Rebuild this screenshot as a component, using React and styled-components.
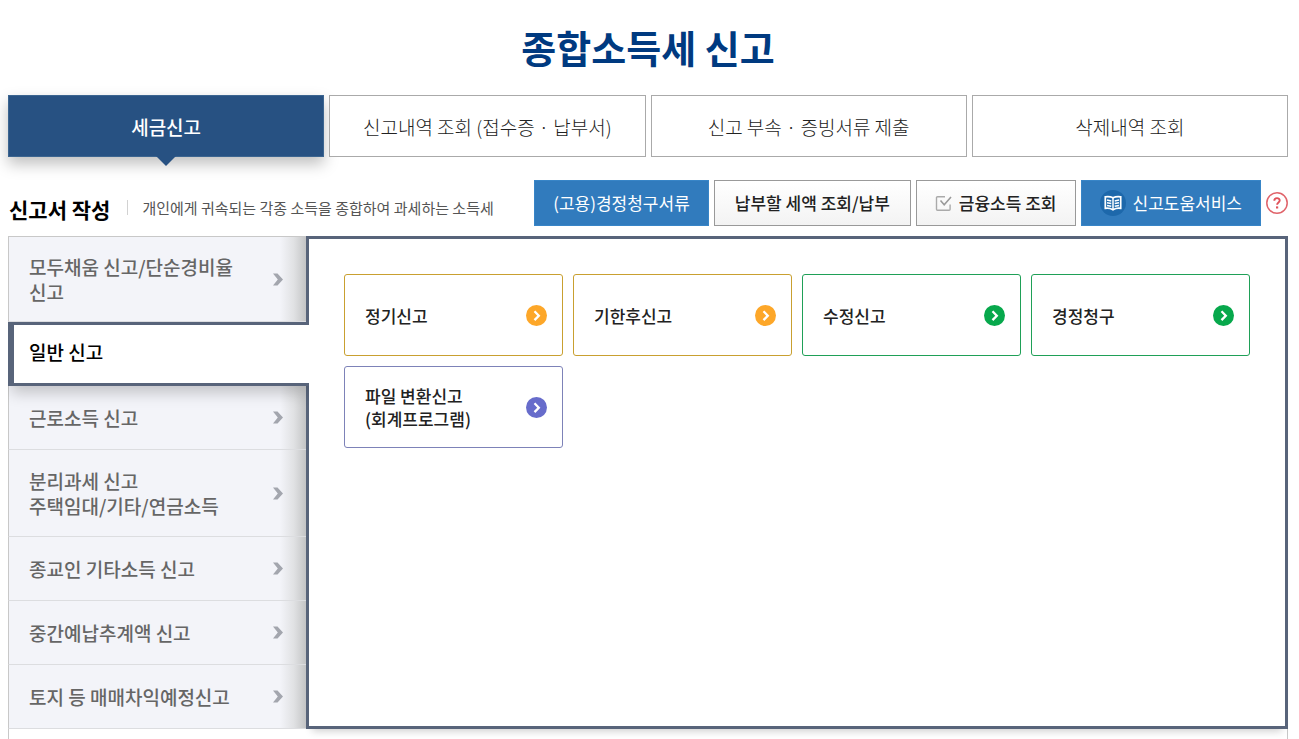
import React from "react";
import styled, { createGlobalStyle, css } from "styled-components";

const Global = createGlobalStyle`
  * { box-sizing: border-box; }
  html, body, #root { height: 100%; }
  body {
    margin: 0;
    background: #fff;
    color: #222;
    font-family: "Noto Sans CJK KR", "Liberation Sans", sans-serif;
  }
  button, a { font-family: inherit; }
`;

const Page = styled.div`
  display: flex;
  flex-direction: column;
  height: 100%;
  min-width: 1240px;
  padding: 0 11px 0 8px;
  overflow: hidden;
`;

const Title = styled.h1`
  margin: 0;
  padding: 17px 0 18px;
  color: #003a80;
  font-size: 38px;
  font-weight: 700;
  line-height: 60px;
  text-align: center;
`;

const Tabs = styled.nav`
  display: grid;
  grid-template-columns: repeat(4, 1fr);
  gap: 5px;
`;

const Tab = styled.a`
  position: relative;
  display: flex;
  align-items: center;
  justify-content: center;
  height: 62px;
  padding-top: 2px;
  border: 1px solid #aaa;
  background: #fff;
  color: #222;
  font-size: 19px;
  font-weight: 300;
  line-height: 28px;
  text-decoration: none;
  ${(p) =>
    p.$active &&
    css`
      border-color: #3c6590;
      background: #275182;
      color: #fff;
      font-weight: 500;
      box-shadow: 0 7px 14px rgba(0, 0, 0, 0.25);
      &::after {
        content: "";
        position: absolute;
        top: 100%;
        left: 50%;
        margin-left: -10px;
        border: 10px solid transparent;
        border-top-color: #275182;
        border-bottom: 0;
      }
    `}
`;

const Header = styled.div`
  display: flex;
  align-items: center;
  justify-content: space-between;
  height: 46px;
  margin: 23px 0 10px;
`;

const Heading = styled.div`
  display: flex;
  align-items: center;
  padding: 12px 0 0 1px;
`;

const SectionTitle = styled.h2`
  margin: 0;
  padding-right: 17px;
  color: #000;
  font-size: 21px;
  font-weight: 700;
  line-height: 30px;
`;

const Summary = styled.p`
  margin: 0 0 4px;
  padding-left: 14px;
  border-left: 1px solid #d2d2d2;
  color: #555;
  font-size: 15px;
  font-weight: 400;
  line-height: 15px;
`;

const Actions = styled.div`
  display: flex;
  align-items: center;
  gap: 5px;
`;

const Action = styled.button`
  display: flex;
  align-items: center;
  gap: 7px;
  height: 46px;
  padding: 0 ${(p) => (p.$wide ? 20 : 18)}px;
  border: 1px solid ${(p) => (p.$primary ? "#3885c7" : "#999")};
  background: ${(p) => (p.$primary ? "#317bbd" : "linear-gradient(#fff, #f3f3f3)")};
  color: ${(p) => (p.$primary ? "#fff" : "#222")};
  font-size: 17px;
  font-weight: ${(p) => (p.$primary ? 400 : 500)};
  line-height: 24px;
  white-space: nowrap;
`;

const HelpButton = styled.button`
  display: flex;
  padding: 0;
  border: 0;
  background: none;
`;

const Body = styled.main`
  display: flex;
  align-items: flex-start;
  flex: 1;
  border: 1px solid #c8c8c8;
  border-width: 0 1px;
`;

const Side = styled.nav`
  display: flex;
  flex-direction: column;
  flex: none;
  width: 301px;
  margin-left: -1px;
  border-right: 3px solid #58647a;
`;

const SideLink = styled.a`
  position: relative;
  display: flex;
  align-items: center;
  justify-content: space-between;
  min-height: 64px;
  padding: 18px 23px 18px 20px;
  border-left: 1px solid #c8c8c8;
  border-bottom: 1px solid #dcdde0;
  background: linear-gradient(to left, #c3c4c5 0, #e0e1e3 12px, #f3f4f9 26px);
  color: #666;
  font-size: 19px;
  font-weight: 500;
  line-height: 25px;
  text-decoration: none;
  white-space: pre-line;
  &:first-child {
    padding-top: 17px;
    padding-bottom: 17px;
    border-top: 1px solid #c8c8c8;
  }
  ${(p) =>
    p.$active &&
    css`
      z-index: 1;
      margin-right: -3px;
      padding: 14px 0 18px 15px;
      border: 3px solid #58647a;
      border-left-width: 6px;
      border-right: 0;
      background: #fff;
      color: #000;
      line-height: 26px;
      box-shadow: 0 10px 14px -3px rgba(0, 0, 0, 0.2);
      clip-path: inset(0 0 -24px 0);
    `}
`;

const Panel = styled.section`
  flex: 1;
  height: 493px;
  margin: 0 -1px 0 -3px;
  padding: 35px 35px 0 38px;
  border: 3px solid #58647a;
  border-left: 0;
  box-shadow: 0 8px 8px -6px rgba(0, 0, 0, 0.2);
`;

const Cards = styled.div`
  display: grid;
  grid-template-columns: repeat(4, 1fr);
  gap: 10px;
`;

const Card = styled.button`
  display: flex;
  align-items: center;
  justify-content: space-between;
  height: 82px;
  padding: 0 15px 0 20px;
  border: 1px solid ${(p) => p.$line};
  border-radius: 3px;
  background: #fff;
  color: #222;
  font-size: 17px;
  font-weight: 500;
  line-height: 23px;
  text-align: left;
  white-space: pre-line;
`;

const SideArrow = () => (
  <svg width="10" height="13" viewBox="0 0 10 13" aria-hidden="true">
    <path d="M0 .5h4.500L10 6.500 4.500 12.500H0l4.800-6z" fill="#a3a6ae" />
  </svg>
);

const CardArrow = ({ color }) => (
  <svg width="21" height="21" viewBox="0 0 21 21" aria-hidden="true">
    <circle cx="10.5" cy="10.5" r="10.5" fill={color} />
    <path d="M8.500 6.300l4.300 4.400-4.300 4.400" fill="none" stroke="#fff" strokeWidth="2.300" />
  </svg>
);

const CheckIcon = () => (
  <svg width="17" height="17" viewBox="0 0 17 17" fill="none" aria-hidden="true">
    <path d="M10 1.700H2.500a1 1 0 0 0-1 1v11.600a1 1 0 0 0 1 1h11.600a1 1 0 0 0 1-1V9.500" stroke="#aaa" strokeWidth="1.400" />
    <path d="M5.500 5.500l3.700 4.200 6.800-7.700" stroke="#999" strokeWidth="1.600" />
  </svg>
);

const BookIcon = () => (
  <svg width="26" height="26" viewBox="0 0 26 26" fill="none" aria-hidden="true">
    <circle cx="13" cy="13" r="13" fill="#1d68ab" />
    <path d="M5.300 6.800q4.200-.8 7.700 1 3.500-1.800 7.700-1v11.500q-4.200-.6-7.700 1.400-3.500-2-7.700-1.400z" stroke="#fff" strokeWidth="1.700" />
    <path d="M13 8v11M7 10l4.300.9M7 12.700l4.300.9M7 15.400l4.300.9M19 10l-4.300.9M19 12.700l-4.300.9M19 15.400l-4.300.9" stroke="#fff" strokeWidth="1.500" />
  </svg>
);

const HelpIcon = () => (
  <svg width="22" height="22" viewBox="0 0 22 22" fill="none" aria-hidden="true">
    <circle cx="11" cy="11" r="10.200" stroke="#e0636a" strokeWidth="1.500" />
    <path d="M8.300 8.700c0-3.400 5.400-3.400 5.400-.2 0 1.900-2.600 2-2.600 4.300" stroke="#e0525a" strokeWidth="1.900" />
    <path d="M10 14.400h2.200v2.100H10z" fill="#e0525a" />
  </svg>
);

const tabs = ["세금신고", "신고내역 조회 (접수증 · 납부서)", "신고 부속 · 증빙서류 제출", "삭제내역 조회"];

const menu = [
  "모두채움 신고/단순경비율\n신고",
  "일반 신고",
  "근로소득 신고",
  "분리과세 신고\n주택임대/기타/연금소득",
  "종교인 기타소득 신고",
  "중간예납추계액 신고",
  "토지 등 매매차익예정신고",
];

const cards = [
  { label: "정기신고", line: "#c9a030", color: "#fda729" },
  { label: "기한후신고", line: "#c9a030", color: "#fda729" },
  { label: "수정신고", line: "#1fa057", color: "#07a84c" },
  { label: "경정청구", line: "#1fa057", color: "#07a84c" },
  { label: "파일 변환신고\n(회계프로그램)", line: "#7d82b8", color: "#676ccb" },
];

export default function App() {
  return (
    <>
      <Global />
      <Page>
        <Title>종합소득세 신고</Title>
        <Tabs>
          {tabs.map((t, i) => (
            <Tab key={t} href="#" $active={i === 0}>{t}</Tab>
          ))}
        </Tabs>
        <Header>
          <Heading>
            <SectionTitle>신고서 작성</SectionTitle>
            <Summary>개인에게 귀속되는 각종 소득을 종합하여 과세하는 소득세</Summary>
          </Heading>
          <Actions>
            <Action $primary>(고용)경정청구서류</Action>
            <Action $wide>납부할 세액 조회/납부</Action>
            <Action><CheckIcon />금융소득 조회</Action>
            <Action $primary><BookIcon />신고도움서비스</Action>
            <HelpButton aria-label="도움말"><HelpIcon /></HelpButton>
          </Actions>
        </Header>
        <Body>
          <Side>
            {menu.map((m, i) => (
              <SideLink key={m} href="#" $active={i === 1}>
                {m}
                {i !== 1 && <SideArrow />}
              </SideLink>
            ))}
          </Side>
          <Panel>
            <Cards>
              {cards.map((c) => (
                <Card key={c.label} $line={c.line}>
                  {c.label}
                  <CardArrow color={c.color} />
                </Card>
              ))}
            </Cards>
          </Panel>
        </Body>
      </Page>
    </>
  );
}
